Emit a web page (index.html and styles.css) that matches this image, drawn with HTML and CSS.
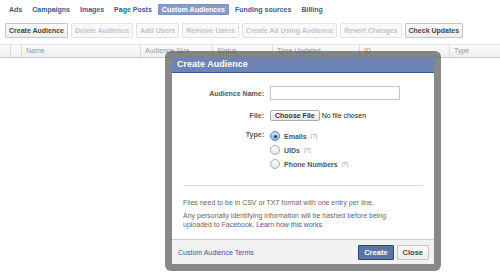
FILE: index.html
```html
<!DOCTYPE html>
<html lang="en">
<head>
    <meta charset="UTF-8">
    <title>Custom Audiences</title>
    <link rel="stylesheet" href="styles.css">
</head>
<body>
    <div class="tabs">
        <a class="tab">Ads</a>
        <a class="tab">Campaigns</a>
        <a class="tab">Images</a>
        <a class="tab">Page Posts</a>
        <a class="tab active">Custom Audiences</a>
        <a class="tab">Funding sources</a>
        <a class="tab">Billing</a>
    </div>

    <div class="toolbar">
        <button class="btn">Create Audience</button>
        <button class="btn off">Delete Audience</button>
        <button class="btn off">Add Users</button>
        <button class="btn off">Remove Users</button>
        <button class="btn off">Create Ad Using Audience</button>
        <button class="btn off">Revert Changes</button>
        <button class="btn">Check Updates</button>
    </div>

    <div class="grid-head">
        <div class="col c-chk"></div>
        <div class="col c-chk"></div>
        <div class="col c-name">Name</div>
        <div class="col c-size">Audience Size</div>
        <div class="col c-status">Status</div>
        <div class="col c-time">Time Updated</div>
        <div class="col c-id">ID</div>
        <div class="col c-type">Type</div>
    </div>

    <div class="dialog">
        <div class="dialog-inner">
            <div class="dialog-title">Create Audience</div>
            <div class="dialog-body">
                <div class="field">
                    <span class="label">Audience Name:</span>
                    <input type="text" class="text-input">
                </div>
                <div class="field">
                    <span class="label">File:</span>
                    <span class="file-btn">Choose File</span>
                    <span class="file-note">No file chosen</span>
                </div>
                <div class="field top">
                    <span class="label">Type:</span>
                    <div class="options">
                        <div class="option"><span class="radio on"></span><b>Emails</b><span class="help">[?]</span></div>
                        <div class="option"><span class="radio"></span><b>UIDs</b><span class="help">[?]</span></div>
                        <div class="option"><span class="radio"></span><b>Phone Numbers</b><span class="help">[?]</span></div>
                    </div>
                </div>
                <div class="notes">
                    <p>Files need to be in CSV or TXT format with one entry per line.</p>
                    <p>Any personally identifying information will be hashed before being<br>uploaded to Facebook. <a class="link">Learn how this works.</a></p>
                </div>
            </div>
            <div class="dialog-foot">
                <a class="link">Custom Audience Terms</a>
                <div class="foot-btns">
                    <button class="btn primary">Create</button>
                    <button class="btn">Close</button>
                </div>
            </div>
        </div>
    </div>
</body>
</html>
```

FILE: styles.css
```css
body {
    margin: 0;
    font-family: "Liberation Sans", Arial, sans-serif;
    font-size: 7px;
    color: #333;
    background: #fff;
    position: relative;
    height: 276px;
    overflow: hidden;
}
.tabs {
    display: flex;
    align-items: center;
    gap: 2px;
    height: 13px;
    padding: 3px 0 0 5px;
}
.tab {
    color: #3b5998;
    font-weight: bold;
    padding: 2px 4px;
    border-radius: 1px;
}
.tab.active {
    background: #8a9dc6;
    color: #fff;
    border: 1px solid #7b8fbb;
    padding: 1px 3px;
}
.toolbar {
    display: flex;
    gap: 3px;
    padding: 7px 0 0 5px;
}
.btn {
    font-family: inherit;
    font-size: 7px;
    font-weight: bold;
    color: #444;
    height: 15px;
    padding: 0 3px;
    background: linear-gradient(#fafafa, #eee);
    border: 1px solid #c6c6c6;
    border-radius: 1px;
    line-height: 13px;
}
.btn.off {
    color: #c4c4c4;
    border-color: #e2e2e2;
    background: #f9f9f9;
}
.grid-head {
    display: flex;
    margin-top: 6px;
    height: 12px;
    background: linear-gradient(#fbfbfb, #eeeeee);
    border-top: 1px solid #e4e4e4;
    border-bottom: 1px solid #c9c9c9;
}
.col {
    border-right: 1px solid #dcdcdc;
    color: #999;
    line-height: 12px;
    padding-left: 4px;
    box-sizing: border-box;
}
.c-chk { width: 11px; padding: 0; }
.c-name { width: 119px; }
.c-size { width: 72px; }
.c-status { width: 60px; }
.c-time { width: 87px; }
.c-id { width: 90px; }
.c-type { flex: 1; border-right: none; }

.dialog {
    position: absolute;
    left: 165px;
    top: 51px;
    width: 276px;
    height: 220px;
    box-sizing: border-box;
    padding: 6px 7px 7px;
    background: rgba(90, 90, 90, 0.72);
    border-radius: 6px;
}
.dialog-inner {
    display: flex;
    flex-direction: column;
    height: 100%;
    background: #fff;
}
.dialog-title {
    background: #6d84b4;
    border-bottom: 1px solid #3b5998;
    color: #fff;
    font-size: 9px;
    font-weight: bold;
    height: 15px;
    line-height: 15px;
    padding-left: 5px;
}
.dialog-body {
    flex: 1;
    padding: 13px 11px 0;
}
.field {
    display: flex;
    align-items: center;
    margin-bottom: 10px;
}
.field.top { align-items: flex-start; margin-top: 1px; }
.label {
    width: 81px;
    text-align: right;
    font-weight: bold;
    color: #555;
    margin-right: 6px;
}
.text-input {
    width: 130px;
    height: 14px;
    box-sizing: border-box;
    border: 1px solid #bdc7d8;
    padding: 0;
}
.file-btn {
    font-weight: bold;
    color: #333;
    background: linear-gradient(#fdfdfd, #e8e8e8);
    border: 1px solid #aaa;
    border-radius: 2px;
    padding: 1px 4px;
}
.file-note { margin-left: 2px; color: #222; }
.options {
    display: flex;
    flex-direction: column;
    gap: 4px;
}
.option {
    display: flex;
    align-items: center;
    color: #555;
}
.radio {
    width: 8px;
    height: 8px;
    border-radius: 50%;
    border: 1px solid #aaa;
    background: linear-gradient(#fff, #e6e6e6);
    margin-right: 4px;
    position: relative;
}
.radio.on {
    border-color: #5a87c6;
    background: linear-gradient(#cfe0f5, #8cb2e4);
}
.radio.on::after {
    content: "";
    position: absolute;
    left: 2.5px;
    top: 2.5px;
    width: 3px;
    height: 3px;
    border-radius: 50%;
    background: #1b3a6a;
}
.help {
    color: #999;
    font-size: 6px;
    margin-left: 4px;
}
.notes {
    border-top: 1px solid #ddd;
    margin-top: 16px;
    padding-top: 12px;
    color: #666;
    font-size: 7px;
}
.notes p { margin: 0 0 4px; line-height: 9px; }
.link { color: #3b5998; }
.dialog-foot {
    display: flex;
    justify-content: space-between;
    align-items: center;
    height: 24px;
    padding: 0 5px 0 6px;
    background: #f2f2f2;
    border-top: 1px solid #ccc;
}
.foot-btns { display: flex; gap: 3px; }
.btn.primary {
    background: #5b74a8;
    border-color: #29447e;
    color: #fff;
}
.foot-btns .btn { height: 15px; font-size: 7.5px; padding: 0 5px; }
```
